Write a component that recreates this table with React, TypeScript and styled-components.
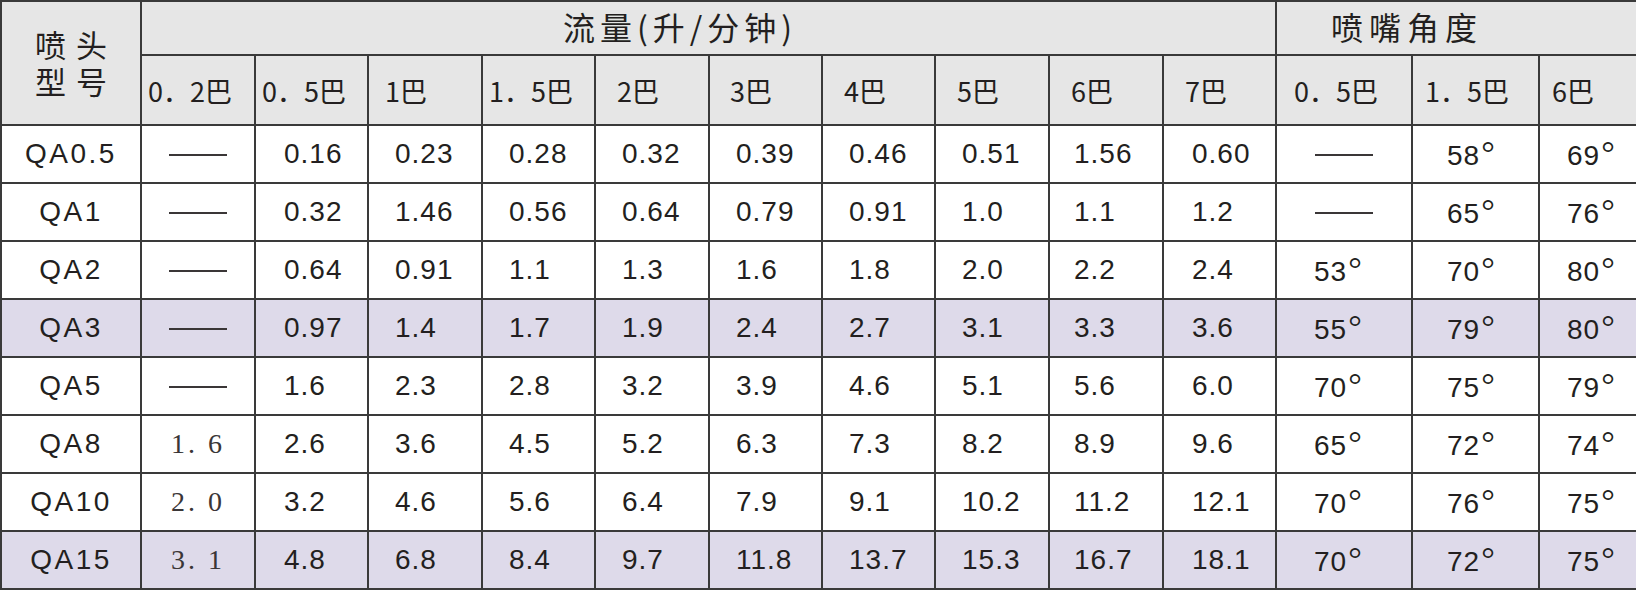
import React from "react";
import styled, { createGlobalStyle } from "styled-components";

const GlobalStyle = createGlobalStyle`
  html, body { margin: 0; padding: 0; background: #ffffff; }
  body { font-family: "Liberation Sans", Arial, sans-serif; color: #231f20; }
`;

const COL_WIDTHS = [140, 114, 113, 114, 113, 114, 113, 113, 114, 114, 113, 136, 127, 98];
const SUB_HEADS = ["0．2巴", "0．5巴", "1巴", "1．5巴", "2巴", "3巴", "4巴", "5巴", "6巴", "7巴", "0．5巴", "1．5巴", "6巴"];
const SUB_PAD = [6, 6, 16, 6, 21, 20, 21, 21, 21, 21, 17, 12, 12];
const DATA_PAD = [0, 28, 26, 26, 26, 26, 26, 26, 24, 28, 37, 34, 27];

type Row = { model: string; low: string | null; flow: string[]; angle: (string | null)[]; shade?: boolean };

const ROWS: Row[] = [
  { model: "QA0.5", low: null, flow: ["0.16", "0.23", "0.28", "0.32", "0.39", "0.46", "0.51", "1.56", "0.60"], angle: [null, "58", "69"] },
  { model: "QA1", low: null, flow: ["0.32", "1.46", "0.56", "0.64", "0.79", "0.91", "1.0", "1.1", "1.2"], angle: [null, "65", "76"] },
  { model: "QA2", low: null, flow: ["0.64", "0.91", "1.1", "1.3", "1.6", "1.8", "2.0", "2.2", "2.4"], angle: ["53", "70", "80"] },
  { model: "QA3", low: null, flow: ["0.97", "1.4", "1.7", "1.9", "2.4", "2.7", "3.1", "3.3", "3.6"], angle: ["55", "79", "80"], shade: true },
  { model: "QA5", low: null, flow: ["1.6", "2.3", "2.8", "3.2", "3.9", "4.6", "5.1", "5.6", "6.0"], angle: ["70", "75", "79"] },
  { model: "QA8", low: "1. 6", flow: ["2.6", "3.6", "4.5", "5.2", "6.3", "7.3", "8.2", "8.9", "9.6"], angle: ["65", "72", "74"] },
  { model: "QA10", low: "2. 0", flow: ["3.2", "4.6", "5.6", "6.4", "7.9", "9.1", "10.2", "11.2", "12.1"], angle: ["70", "76", "75"] },
  { model: "QA15", low: "3. 1", flow: ["4.8", "6.8", "8.4", "9.7", "11.8", "13.7", "15.3", "16.7", "18.1"], angle: ["70", "72", "75"], shade: true },
];

const Table = styled.table`
  border-collapse: collapse;
  table-layout: fixed;
  width: 1636px;
  border: 2px solid #4a4a4a;
`;

const HeadRow = styled.tr<{ $h: number }>`
  height: ${(p) => p.$h}px;
  background: #e6e6e6;
`;

const BodyRow = styled.tr<{ $shade?: boolean }>`
  height: 58px;
  background: ${(p) => (p.$shade ? "#dedaea" : "#ffffff")};
`;

const TitleCell = styled.th<{ $pl: number; $ls: number }>`
  border: 2px solid #3a3a3a;
  padding: 0 0 4px ${(p) => p.$pl}px;
  font-family: "Noto Sans CJK SC", sans-serif;
  font-weight: 400;
  font-size: 32px;
  letter-spacing: ${(p) => p.$ls}px;
  text-align: left;
  color: #231f20;
  white-space: nowrap;
`;

const ModelHead = styled.th`
  border: 2px solid #3a3a3a;
  padding: 0 0 2px 10px;
  font-family: "Noto Sans CJK SC", sans-serif;
  font-weight: 400;
  font-size: 31px;
  line-height: 37px;
  letter-spacing: 10px;
  text-align: center;
  color: #231f20;
`;

const ModelLine = styled.span`
  display: block;
`;

const SubHead = styled.th<{ $pl: number }>`
  border: 2px solid #3a3a3a;
  padding: 0 0 0 ${(p) => p.$pl}px;
  font-family: "Noto Sans CJK SC", sans-serif;
  font-weight: 400;
  font-size: 27px;
  text-align: left;
  color: #231f20;
  white-space: nowrap;
`;

const ModelCell = styled.td`
  border: 2px solid #3a3a3a;
  padding: 0;
  font-size: 28px;
  letter-spacing: 2.5px;
  text-align: center;
  white-space: nowrap;
`;

const LowCell = styled.td`
  border: 2px solid #3a3a3a;
  padding: 0;
  font-family: "Liberation Serif", serif;
  font-size: 28px;
  letter-spacing: 3px;
  text-align: center;
  white-space: nowrap;
  color: #3a3637;
`;

const ValueCell = styled.td<{ $pl: number }>`
  border: 2px solid #3a3a3a;
  padding: 0 0 0 ${(p) => p.$pl}px;
  font-size: 28px;
  letter-spacing: 1px;
  text-align: left;
  white-space: nowrap;
`;

const DashCell = styled.td`
  border: 2px solid #3a3a3a;
  padding: 0;
  text-align: center;
`;

const Dash = styled.span`
  display: inline-block;
  width: 58px;
  height: 1.5px;
  background: #3a3637;
  vertical-align: middle;
`;

const Deg = styled.span`
  display: inline-block;
  font-family: "Liberation Serif", serif;
  font-size: 34px;
  line-height: 1;
  margin-left: 1px;
  transform: translateY(-1px);
`;

export default function App() {
  return (
    <>
      <GlobalStyle />
      <Table>
        <colgroup>
          {COL_WIDTHS.map((w, i) => (
            <col key={i} style={{ width: w }} />
          ))}
        </colgroup>
        <thead>
          <HeadRow $h={54}>
            <ModelHead rowSpan={2}>
              <ModelLine>喷头</ModelLine>
              <ModelLine>型号</ModelLine>
            </ModelHead>
            <TitleCell colSpan={10} $pl={421} $ls={5}>
              流量(升/分钟)
            </TitleCell>
            <TitleCell colSpan={3} $pl={54} $ls={6}>
              喷嘴角度
            </TitleCell>
          </HeadRow>
          <HeadRow $h={70}>
            {SUB_HEADS.map((s, i) => (
              <SubHead key={i} $pl={SUB_PAD[i]}>
                {s}
              </SubHead>
            ))}
          </HeadRow>
        </thead>
        <tbody>
          {ROWS.map((r) => (
            <BodyRow key={r.model} $shade={r.shade}>
              <ModelCell>{r.model}</ModelCell>
              {r.low ? (
                <LowCell>{r.low}</LowCell>
              ) : (
                <DashCell>
                  <Dash />
                </DashCell>
              )}
              {r.flow.map((v, i) => (
                <ValueCell key={i} $pl={DATA_PAD[i + 1]}>
                  {v}
                </ValueCell>
              ))}
              {r.angle.map((a, i) =>
                a ? (
                  <ValueCell key={`a${i}`} $pl={DATA_PAD[i + 10]}>
                    {a}
                    <Deg>°</Deg>
                  </ValueCell>
                ) : (
                  <DashCell key={`a${i}`}>
                    <Dash />
                  </DashCell>
                )
              )}
            </BodyRow>
          ))}
        </tbody>
      </Table>
    </>
  );
}
